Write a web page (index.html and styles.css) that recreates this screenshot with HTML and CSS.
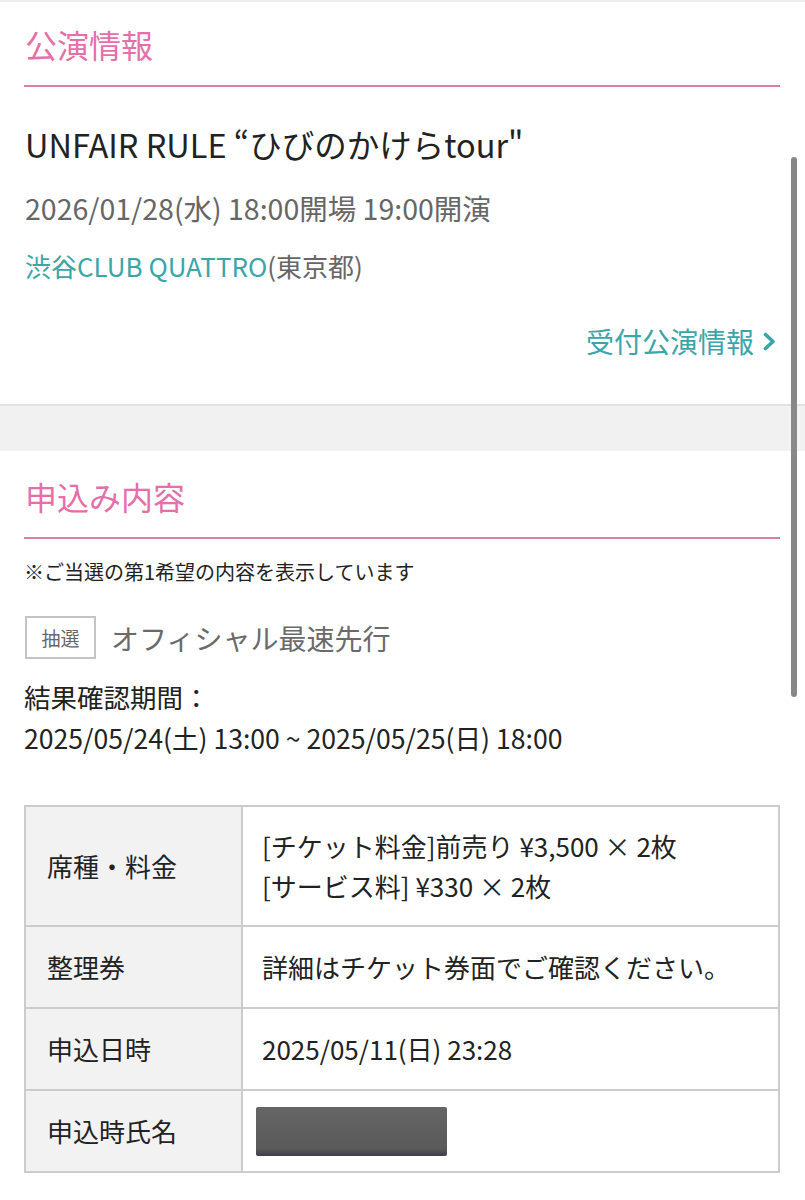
FILE: index.html
```html
<!DOCTYPE html>
<html lang="ja">
<head>
<meta charset="utf-8">
<title>公演情報</title>
<link rel="stylesheet" href="styles.css">
</head>
<body>
<div class="page">
  <section class="panel panel-top">
    <h2 class="sec-title">公演情報</h2>
    <div class="event">
      <p class="ev-title">UNFAIR RULE “ひびのかけらtour"</p>
      <p class="ev-date">2026/01/28(水) 18:00開場 19:00開演</p>
      <p class="ev-venue"><span class="teal">渋谷CLUB QUATTRO</span>(東京都)</p>
      <div class="more-row">
        <a class="more" href="#">受付公演情報<svg class="chev" viewBox="0 0 13 19" width="13" height="19"><path d="M2.5 2.5 L10 9.5 L2.5 16.5" fill="none" stroke="currentColor" stroke-width="3.6" stroke-linecap="round" stroke-linejoin="round"/></svg></a>
      </div>
    </div>
  </section>
  <div class="band"></div>
  <section class="panel panel-apply">
    <h2 class="sec-title">申込み内容</h2>
    <p class="note">※ご当選の第1希望の内容を表示しています</p>
    <div class="type-row">
      <span class="badge">抽選</span>
      <span class="type-name">オフィシャル最速先行</span>
    </div>
    <p class="period-label">結果確認期間：</p>
    <p class="period">2025/05/24(土) 13:00 ~ 2025/05/25(日) 18:00</p>
    <table class="info">
      <tr class="r1">
        <th>席種・料金</th>
        <td>[チケット料金]前売り ¥3,500 × 2枚<br>[サービス料] ¥330 × 2枚</td>
      </tr>
      <tr>
        <th>整理券</th>
        <td>詳細はチケット券面でご確認ください。</td>
      </tr>
      <tr>
        <th>申込日時</th>
        <td>2025/05/11(日) 23:28</td>
      </tr>
      <tr>
        <th>申込時氏名</th>
        <td><span class="redact"></span></td>
      </tr>
    </table>
  </section>
  <div class="scrollbar"></div>
</div>
</body>
</html>
```
FILE: styles.css
```css
html, body {
  margin: 0;
  padding: 0;
  background: #ffffff;
}
body {
  font-family: "Noto Sans CJK JP", "Noto Sans", sans-serif;
  color: #222222;
}
p { margin: 0; }
.page {
  position: relative;
  width: 805px;
  height: 1200px;
  overflow: hidden;
  border-top: 2px solid #ececec;
  box-sizing: border-box;
}
.panel {
  background: #fff;
  padding: 0 25px 0 24px;
}
.panel-top {
  padding-bottom: 43px;
}
.panel-apply {
  padding-top: 3px;
}
.sec-title {
  margin: 0;
  font-size: 32px;
  font-weight: 400;
  color: #e46fa9;
  line-height: 40px;
  padding: 22px 0 21px 1px;
  border-bottom: 2px solid #db7fa9;
}
.event {
  padding-left: 1px;
}
.ev-title {
  font-size: 32.5px;
  line-height: 44px;
  color: #222;
  margin-top: 35px;
}
.ev-date {
  font-size: 28.5px;
  line-height: 40px;
  color: #666;
  margin-top: 22px;
}
.ev-venue {
  font-size: 26px;
  line-height: 36px;
  color: #666;
  margin-top: 20px;
}
.teal { color: #3aa6a8; }
.more-row {
  display: flex;
  justify-content: flex-end;
  margin-top: 37px;
}
.more {
  display: flex;
  align-items: center;
  gap: 9px;
  height: 40px;
  margin-right: 4px;
  font-size: 28px;
  color: #3aa6a8;
  text-decoration: none;
}
.band {
  height: 45px;
  background: #f1f1f1;
  border-top: 2px solid #e2e2e2;
}
.note {
  font-size: 20px;
  line-height: 30px;
  margin-top: 18px;
}
.type-row {
  display: flex;
  align-items: center;
  gap: 15px;
  margin-top: 29px;
  padding-left: 1px;
}
.badge {
  box-sizing: border-box;
  width: 71px;
  height: 43px;
  border: 2px solid #c4c4c4;
  display: flex;
  align-items: center;
  justify-content: center;
  font-size: 19px;
  color: #666;
}
.type-name {
  font-size: 28px;
  color: #6a6a6a;
}
.period-label {
  font-size: 26.5px;
  line-height: 36px;
  margin-top: 20px;
}
.period {
  font-size: 26.6px;
  line-height: 36px;
  margin-top: 5px;
}
.info {
  margin-top: 49px;
  width: 100%;
  border-collapse: collapse;
  border: 2px solid #cccccc;
}
.info th, .info td {
  border: 2px solid #cccccc;
  font-size: 26px;
  font-weight: 400;
  text-align: left;
  line-height: 40px;
  color: #222;
}
.info th {
  width: 174px;
  background: #f2f2f2;
  padding: 0 20px 0 21px;
}
.info td {
  padding: 0 19px;
  height: 80px;
}
.info tr.r1 td, .info tr.r1 th { height: 118px; }
.redact {
  display: block;
  width: 191px;
  height: 49px;
  margin-left: -6px;
  border-radius: 2px;
  background: linear-gradient(#656565, #5a5a5a 85%, #3e3f48);
}
.scrollbar {
  position: absolute;
  right: 8px;
  top: 155px;
  width: 6px;
  height: 540px;
  border-radius: 3px;
  background: #888;
}
```
